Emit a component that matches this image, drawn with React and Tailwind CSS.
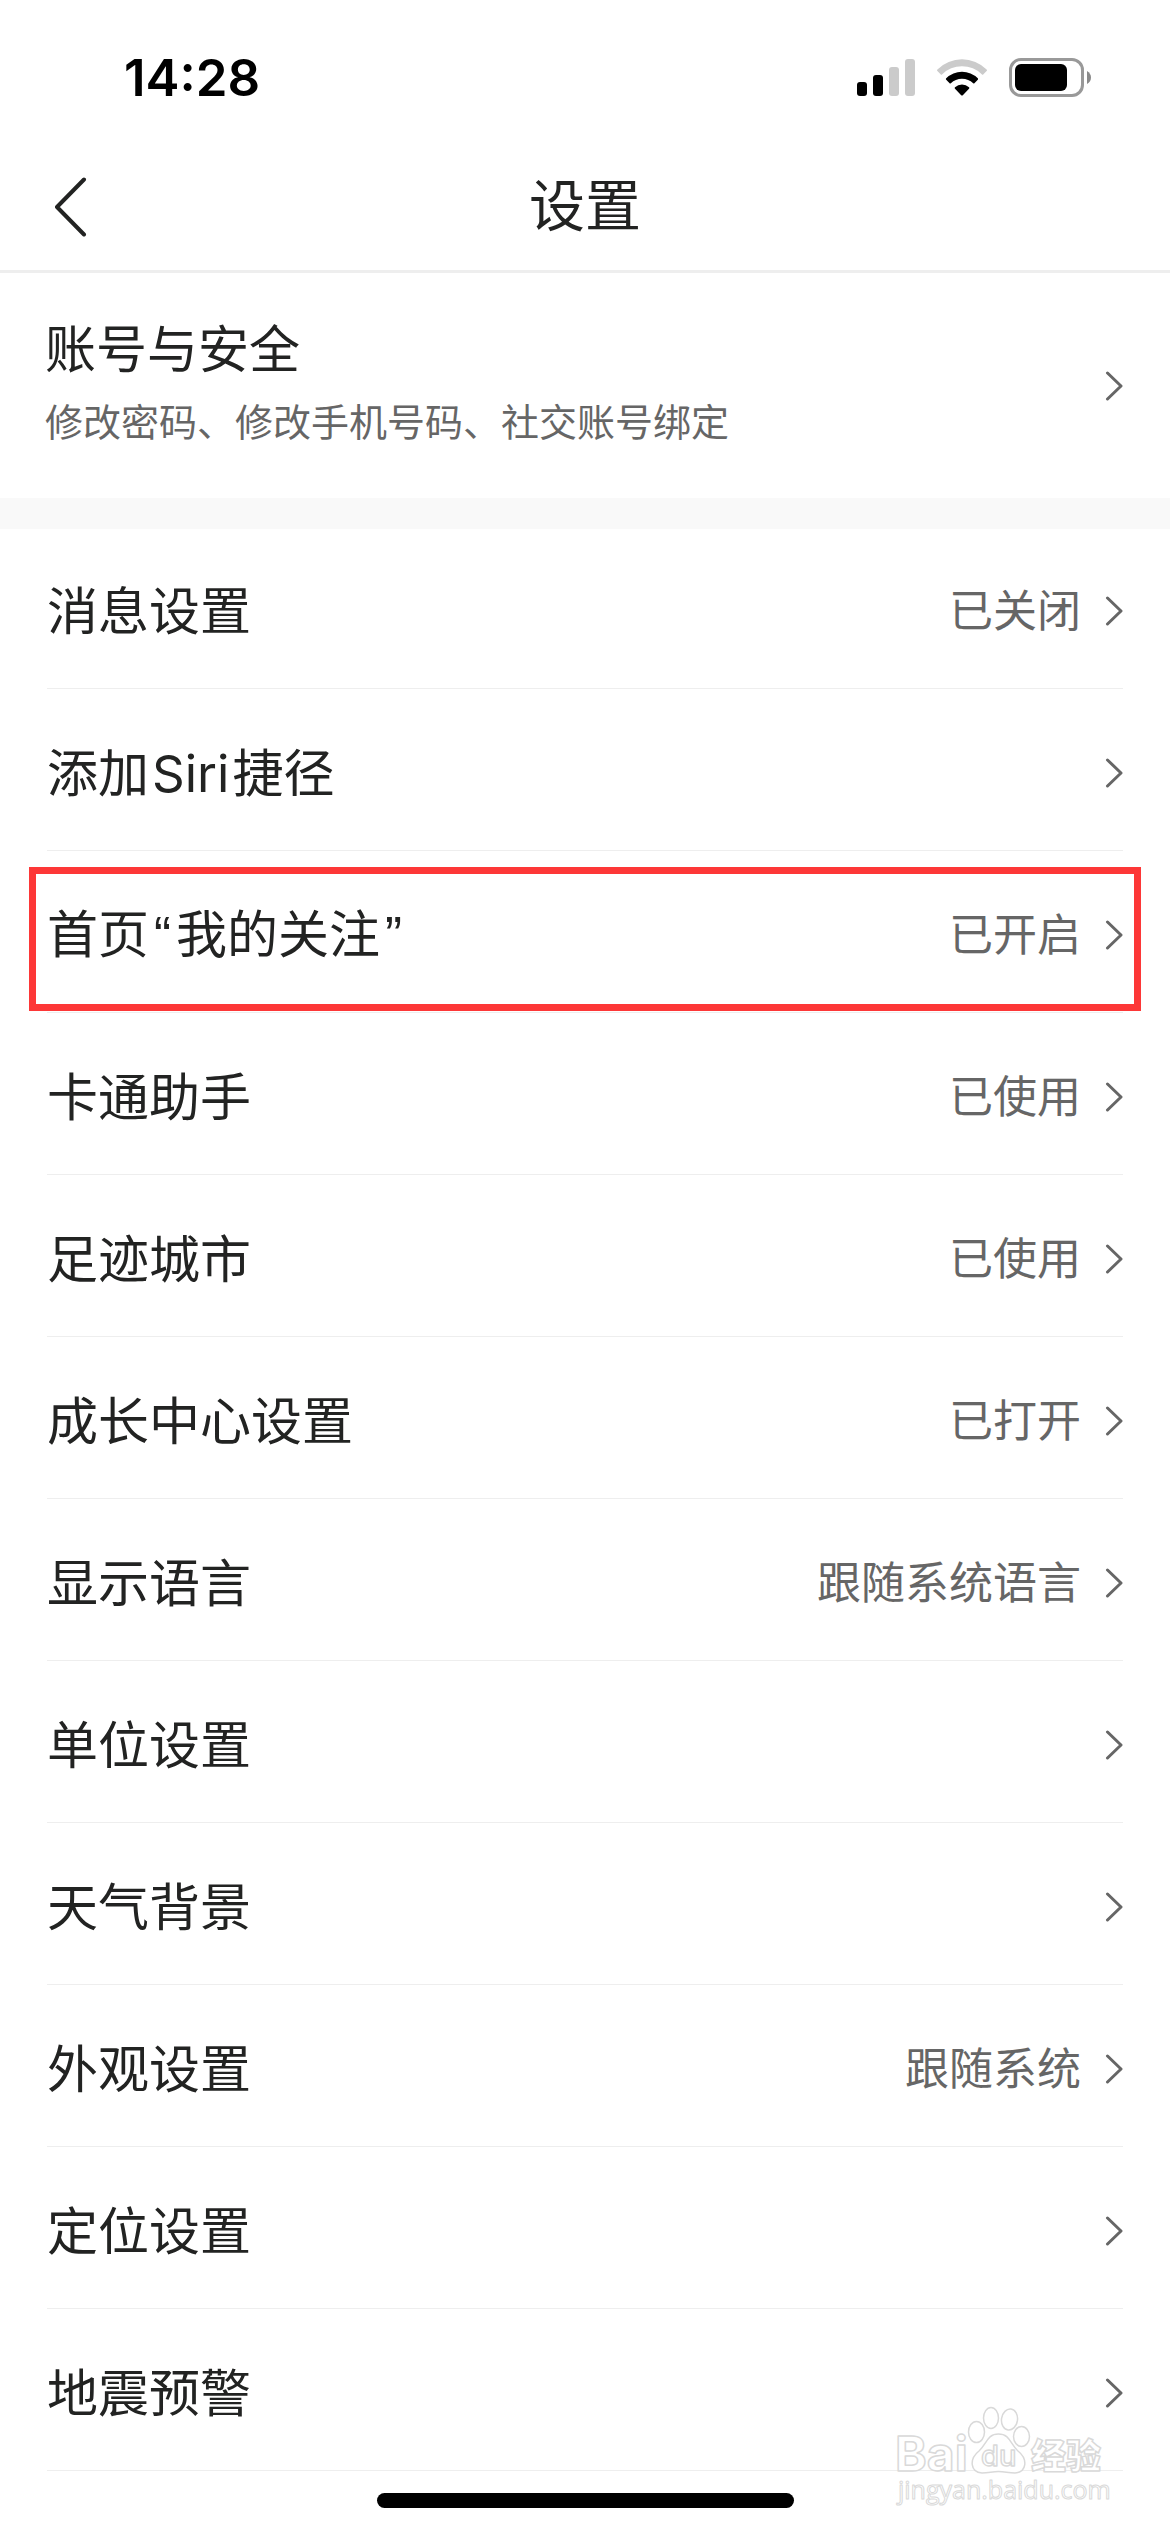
import clsx from "clsx";

const settings = [
  { label: "消息设置", value: "已关闭" },
  {
    label: (
      <>
        添加<span className="mx-[3px]">Siri</span>捷径
      </>
    ),
  },
  {
    label: (
      <>
        首页<Quote>“</Quote>我的关注<Quote>”</Quote>
      </>
    ),
    value: "已开启",
    highlighted: true,
  },
  { label: "卡通助手", value: "已使用" },
  { label: "足迹城市", value: "已使用" },
  { label: "成长中心设置", value: "已打开" },
  { label: "显示语言", value: "跟随系统语言" },
  { label: "单位设置" },
  { label: "天气背景" },
  { label: "外观设置", value: "跟随系统" },
  { label: "定位设置" },
  { label: "地震预警" },
];

function Quote({ children }) {
  return (
    <span className="mx-[5px] font-['Liberation_Sans',sans-serif]">
      {children}
    </span>
  );
}

function Chevron() {
  return (
    <svg
      width="18"
      height="30"
      viewBox="0 0 18 30"
      fill="none"
      stroke="#666666"
      strokeWidth="3"
      strokeLinecap="round"
      strokeLinejoin="round"
      className="shrink-0"
      aria-hidden="true"
    >
      <path d="M2.5 2 L16 15 L2.5 28" />
    </svg>
  );
}

function StatusBar() {
  return (
    <div className="flex h-[141px] items-center justify-between pt-[14px] pr-[79px] pl-[124px] text-black">
      <span className="text-[51px] leading-[60px] font-semibold">14:28</span>
      <div className="flex items-center gap-[22px]">
        <svg width="58" height="39" viewBox="0 0 58 39" aria-hidden="true">
          <rect x="0" y="24" width="10" height="14" rx="3" />
          <rect x="16" y="17" width="10" height="21" rx="3" />
          <rect x="32" y="9" width="10" height="29" rx="3" fill="#cbcbcb" />
          <rect x="48" y="1" width="10" height="37" rx="3" fill="#cbcbcb" />
        </svg>
        <svg width="50" height="39" viewBox="0 0 50 39" aria-hidden="true">
          <path
            d="M0.4 11.4 A35 35 0 0 1 49.6 11.4 Q50.4 12.2 49.6 13 L46.2 16.4 Q45.6 17 45 16.4 A28.5 28.5 0 0 0 5 16.4 Q4.4 17 3.8 16.4 L0.4 13 Q-0.4 12.2 0.4 11.4 Z"
            fill="#cbcbcb"
          />
          <path d="M9.2 20.2 A22.5 22.5 0 0 1 40.8 20.2 Q41.6 21 40.8 21.8 L37.4 25.2 Q36.8 25.8 36.2 25.2 A16 16 0 0 0 13.8 25.2 Q13.2 25.8 12.6 25.2 L9.2 21.8 Q8.4 21 9.2 20.2 Z" />
          <path d="M18 29.2 A10.3 10.3 0 0 1 32 29.2 Q32.8 30 32 30.8 L25.8 37.2 Q25 38 24.2 37.2 L18 30.8 Q17.2 30 18 29.2 Z" />
        </svg>
        <svg width="82" height="39" viewBox="0 0 82 39" aria-hidden="true">
          <rect
            x="1.5"
            y="1.5"
            width="72"
            height="36"
            rx="10.5"
            fill="none"
            stroke="#999999"
            strokeWidth="3"
          />
          <rect x="6" y="6" width="52" height="27" rx="6" />
          <path d="M78 13 Q82 15.5 82 19.5 Q82 23.5 78 26 Z" fill="#8a8a8a" />
        </svg>
      </div>
    </div>
  );
}

function NavBar() {
  return (
    <header className="grid h-[132px] grid-cols-[1fr_auto_1fr] items-center border-b-[3px] border-[#eeeeee]">
      <button type="button" aria-label="返回" className="pl-[53px]">
        <svg
          width="34"
          height="62"
          viewBox="0 0 34 62"
          fill="none"
          stroke="#222322"
          strokeWidth="4"
          strokeLinecap="round"
          strokeLinejoin="round"
        >
          <path d="M31 4.500 L4 32 L31 59.500" />
        </svg>
      </button>
      <h1 className="text-[56px] leading-[72px]">设置</h1>
    </header>
  );
}

function SettingRow({ label, value, highlighted }) {
  return (
    <li className="group relative px-[47px]">
      <button
        type="button"
        className="flex h-[162px] w-full items-center border-b border-[#eeeeee] pt-[6px] text-left group-first:h-[160px] group-first:pt-1"
      >
        <span className="flex-1 pt-[2px] text-[51px] leading-[72px]">
          {label}
        </span>
        {value && (
          <span className="mr-6 text-[44px] leading-[72px] text-[#666666]">
            {value}
          </span>
        )}
        <Chevron />
      </button>
      {highlighted && (
        <div
          className={clsx(
            "pointer-events-none absolute inset-x-[29px] top-4 bottom-[2px]",
            "border-[7px] border-[#fd3737]"
          )}
        />
      )}
    </li>
  );
}

function Watermark() {
  return (
    <svg
      width="220"
      height="115"
      viewBox="0 0 220 115"
      fill="#ffffff"
      stroke="#d9d9d9"
      strokeWidth="1.5"
      strokeLinejoin="round"
      className="pointer-events-none absolute right-[60px] bottom-[17px]"
    >
      <ellipse cx="86.5" cy="32" rx="8" ry="10.5" />
      <ellipse cx="101" cy="18" rx="7.5" ry="10.5" />
      <ellipse cx="119.5" cy="19.5" rx="8" ry="10.5" transform="rotate(8 119.5 19.5)" />
      <ellipse cx="131.5" cy="36.5" rx="8" ry="10" />
      <path d="M108.5 34 C120 34 120 44 128 51 C138 59 137 72 125 73 C118 73 115 71.5 108.5 71.5 C102 71.5 99 73 92 73 C80 72 79 59 89 51 C97 44 97 34 108.5 34 Z" />
      <g fontFamily="Inter, sans-serif" fontWeight="700">
        <text x="5" y="71" fontSize="48">
          Bai
        </text>
        <text x="91" y="66" fontSize="29" fontWeight="500">
          du
        </text>
      </g>
      <text
        x="141"
        y="69"
        fontSize="35"
        fontWeight="900"
        fontFamily="'Noto Sans CJK SC', sans-serif"
      >
        经验
      </text>
      <text
        x="8"
        y="99"
        fontSize="25"
        strokeWidth="1"
        fontFamily="'Open Sans', sans-serif"
      >
        jingyan.baidu.com
      </text>
    </svg>
  );
}

export default function App() {
  return (
    <div className="relative flex min-h-screen flex-col bg-white font-['Inter','Noto_Sans_CJK_SC',sans-serif] text-[#222322]">
      <StatusBar />
      <NavBar />
      <main className="flex-1">
        <button
          type="button"
          className="flex h-[225px] w-full items-center pr-[47px] pl-[45px] text-left"
        >
          <span className="flex flex-1 flex-col">
            <span className="text-[51px] leading-[72px]">账号与安全</span>
            <span className="text-[38px] leading-[72px] text-[#666666]">
              修改密码、修改手机号码、社交账号绑定
            </span>
          </span>
          <Chevron />
        </button>
        <div className="h-[31px] bg-[#f9f9f9]" />
        <ul>
          {settings.map((item, index) => (
            <SettingRow key={index} {...item} />
          ))}
        </ul>
      </main>
      <footer className="flex justify-center pt-[21px] pb-6">
        <div className="h-[15px] w-[417px] rounded-full bg-black" />
      </footer>
      <Watermark />
    </div>
  );
}
